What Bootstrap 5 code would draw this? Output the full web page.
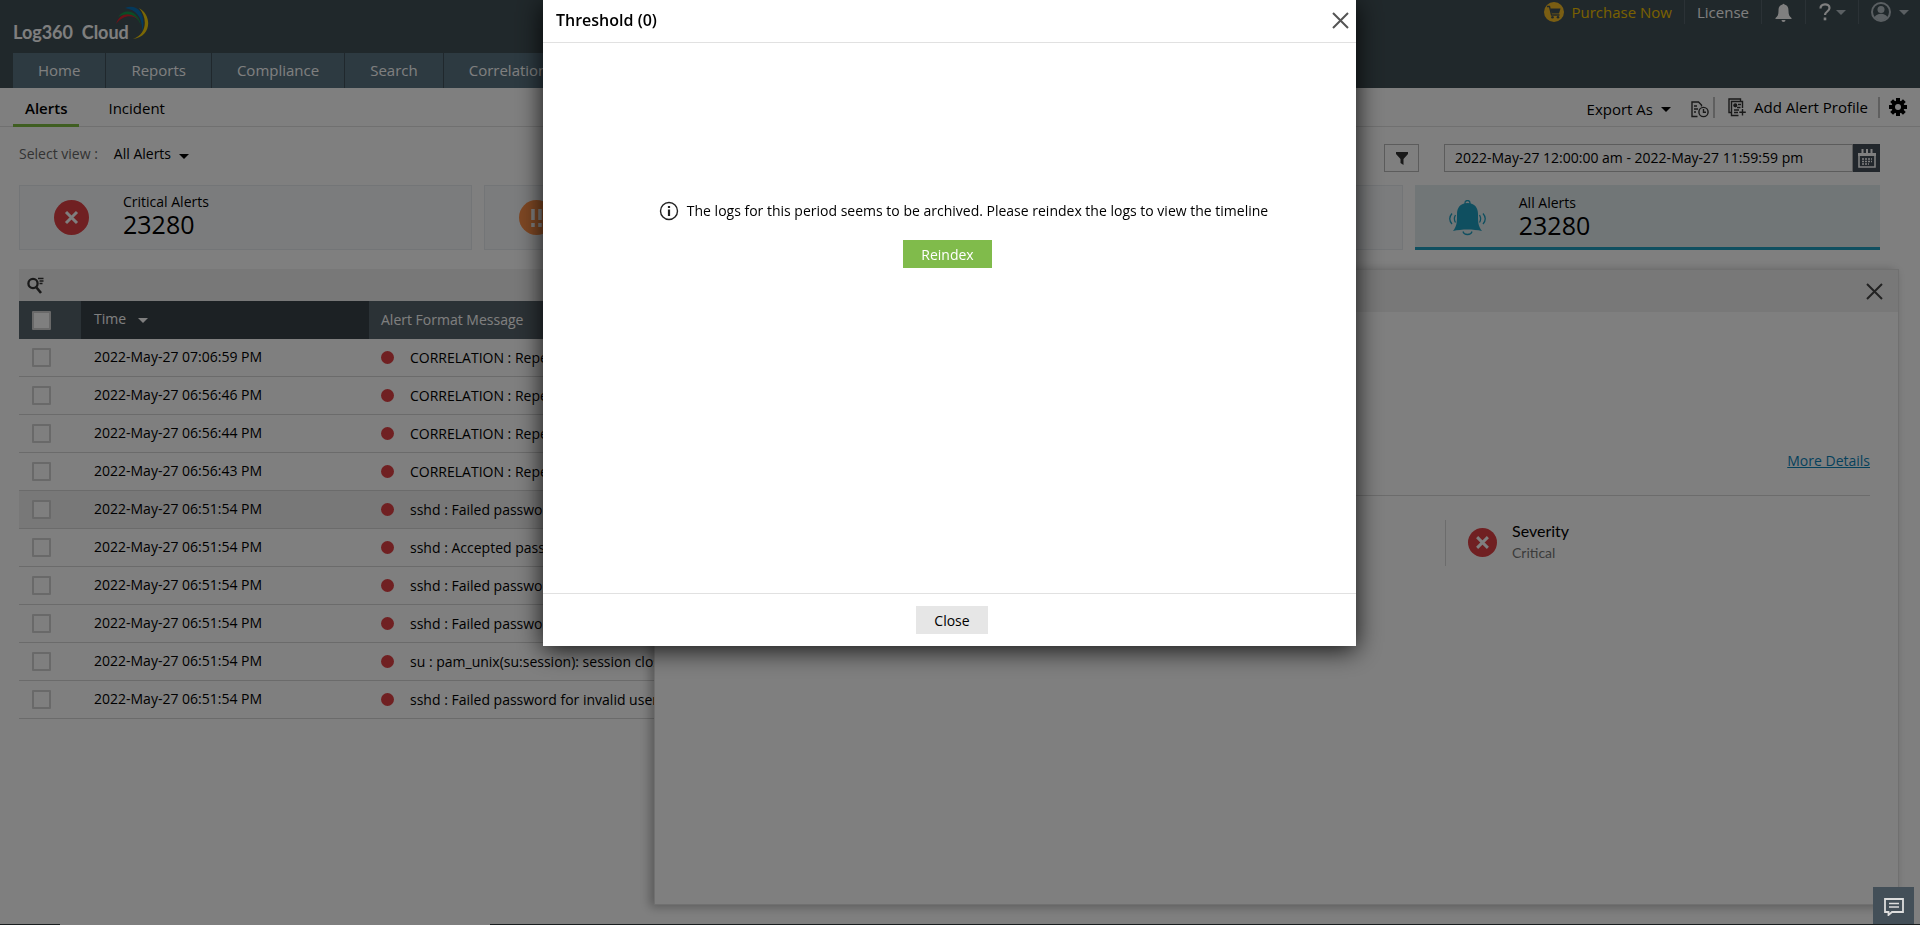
<!DOCTYPE html>
<html lang="en">
<head>
<meta charset="utf-8">
<meta name="viewport" content="width=device-width, initial-scale=1">
<title>Log360 Cloud</title>
<link href="https://cdn.jsdelivr.net/npm/bootstrap@5.3.0/dist/css/bootstrap.min.css" rel="stylesheet">
<style>
body{font-family:"Open Sans",sans-serif;font-size:14px;line-height:20px;color:#000;background:#fff;overflow:hidden}
a{text-decoration:none;color:inherit}
button{color:inherit}
svg{display:block;flex:none}
.bare{background:none;border:0;padding:0}
.topbar{background:#415056;height:88px;color:#fff}
.brand{font-family:Lato,"Open Sans",sans-serif;font-weight:700;font-size:18px;line-height:24px;padding:5px 0 0 13px;height:45px}
.brand-name{margin-top:15px}
.brand svg{margin-left:-14px}
.tools{font-size:15px;padding-right:11px;height:24px}
.tools .cell{height:24px;display:flex;align-items:center;border-left:1px solid #56656c;padding:0 12px}
.tools .cell:first-child{border:0}
.tools .cell:last-child{padding-right:0}
.buy{color:#f2c200}
.tools .caret,.account{color:#b5bfc5}
.caret{display:inline-block;border:5px solid transparent;border-top-color:currentColor;border-bottom:0}
.mainnav{padding-left:13px;font-size:15px}
.mainnav .nav-link{background:#5a7483;color:#fff;padding:0 25px;height:35px;line-height:34px;border-right:1px solid #40505a}
.subbar{height:39px;border-bottom:1px solid #e1e1e1;font-size:15px}
.subtabs{padding-left:13px}
.subtabs .nav-link{color:#000;height:39px;padding:0 12px;line-height:40px;margin-right:17px;border-bottom:3px solid transparent}
.subtabs .active{font-weight:600;border-color:#7fbc42}
.rule{width:2px;height:21px;background:#bfbfbf}
.filters{padding:17px 40px 0 19px;height:58px}
.filters label{color:#666}
.iconbtn{width:35px;height:28px;border:1px solid #b9b9b9;background:#fff;display:flex;align-items:center;justify-content:center;padding:0}
.daterange{width:436px;margin-left:25px}
.daterange input{border:1px solid #b9b9b9;border-radius:0;height:28px;padding:0 10px 2px;flex:1;min-width:0;font:inherit;color:#000}
.daterange button{width:27px;height:28px;background:#444f59;border:0;padding:0;display:flex;align-items:center;justify-content:center}
.tiles{padding:0 40px 0 19px}
.tile-col{width:25%;padding-right:12px}
.tile-col:last-child{padding-right:0}
.tile{height:65px;border:1px solid #e6eaee;background:#f7f9fb;padding-left:34px;display:flex;align-items:center}
.tile .words{margin-left:34px;line-height:20px;padding-bottom:6px}
.tile .total{font-size:25px;line-height:25px}
.tile.on{background:#e2edef;border:0;border-bottom:3px solid #1f9fc1;padding-left:34px}
.tile.on svg{margin-top:3px}
.tile.on .words{padding-bottom:2px;margin-left:33px}
.stage{margin:19px 21px 19px 19px;flex:1;position:relative}
.searchbar{height:32px;background:#f1f1f1;padding:8px 8px}
.alerts{width:100%;table-layout:fixed;border-collapse:separate;border-spacing:0}
.alerts th{height:38px;background:#57646c;color:#fff;font-weight:400;padding:0 13px}
.alerts th.sorted{background:#384249;padding-bottom:2px}
.alerts td{height:38px;border-bottom:1px solid #d6d6d6;padding:0 13px;white-space:nowrap;overflow:hidden}
.alerts td:nth-child(2){padding-bottom:2px}
.alerts td:nth-child(3),.alerts th:nth-child(3){padding-left:12px}
.alerts .picked td{background:#f1f1f1}
.check{appearance:none;width:19px;height:19px;border:2px solid #d2d2d2;background:#fff;display:block;margin:0;border-radius:1px}
.dot{width:13px;height:13px;border-radius:50%;background:#e04144;margin-right:16px;flex:none}
.detail{position:absolute;top:0;right:0;bottom:0;width:66.2%;background:#fff;border:1px solid #e0e0e0;box-shadow:-4px 2px 10px rgba(0,0,0,.3)}
.detail-head{height:42px;background:#f1f1f1;padding:0 15px}
.detail-main{margin:0 28px 0 28px}
.more{padding-top:139px;height:184px;border-bottom:1px solid #d9d9d9}
.more a{color:#0a83b9;text-decoration:underline}
.severity{width:425px;height:46px;margin-top:24px;border-left:1px solid #d9d9d9;padding:0 0 2px 22px;font-family:Lato,sans-serif}
.severity .name{font-size:16px;line-height:22px}
.severity .level{color:#777;line-height:22px}
.edge{height:1px;background:#323a3d}
.edge i{height:1px;background:#fff;width:430px;margin-left:60px}
.modal{padding-right:21px}
.modal-backdrop{--bs-backdrop-opacity:.5}
.modal-dialog{max-width:813px;margin:0 auto}
.modal-content{border:0;border-radius:0;box-shadow:0 4px 24px rgba(0,0,0,.85);color:#000}
.modal-header{height:43px;padding:0 7px 2px 13px;border-color:#e1e1e1;border-radius:0}
.modal-title{font-size:16px;line-height:22px;font-weight:600}
.modal-body{height:550px;padding:147px 0 0}
.modal-footer{height:53px;padding:0;border-color:#e1e1e1}
.notice{padding-left:28px;height:42px}
.modal .btn{border:0;border-radius:0;font-size:14px;height:28px;padding:0 18px;line-height:27px}
.btn-go{background:#80bb4b;color:#fff;margin-right:4px}
.modal .btn-shut{background:#e6e6e6;color:#000;margin-left:9px}
.chat{position:fixed;right:6px;bottom:1px;width:41px;height:37px;background:#434f58;z-index:1060;border:0;padding:2px 0 0;display:flex;align-items:center;justify-content:center}
</style>
</head>
<body>
<div class="vh-100 d-flex flex-column">
  <header class="topbar d-flex flex-column justify-content-between">
    <div class="d-flex justify-content-between">
      <a href="#" class="brand d-flex"><span class="brand-name">Log360 &nbsp;Cloud</span>
        <svg width="35" height="35" viewBox="0 0 35 35" fill="none"><path d="M1 19C5 7 17 6 24 15C17 9 8 10 1 19Z" fill="#d9232e"/><path d="M3 12C10 3 22 5 26 20C22 10 13 6 3 12Z" fill="#159a4c"/><path d="M10 3C23-2 32 10 27 27C28 13 22 5 10 3Z" fill="#0872b9"/><path d="M24 3C38 11 36 32 18 34C32 29 33 13 24 3Z" fill="#f5cf0a"/></svg></a>
      <div class="tools d-flex">
        <a href="#" class="cell buy"><svg class="me-2" width="20" height="20" viewBox="0 0 20 20"><circle cx="10" cy="10" r="10" fill="#f4bd27"/><path d="M3 4.500h2.500l2 8.500h8" fill="none" stroke="#415056" stroke-width="1.300"/><path d="M6.500 6.500h10l-1.500 5h-7.500Z" fill="#415056"/><circle cx="8.500" cy="15.200" r="1.300" fill="#415056"/><circle cx="14" cy="15.200" r="1.300" fill="#415056"/></svg>Purchase Now</a>
        <a href="#" class="cell">License</a>
        <a href="#" class="cell" aria-label="Notifications"><svg width="19" height="19" viewBox="0 0 17 19" fill="#fff"><path d="M7.500 1.500a1.200 1.200 0 0 1 2 0C13 2.500 13.500 5 13.500 8c0 4 1 5.500 3 7v1H.5v-1c2-1.500 3-3 3-7 0-3 .5-5.500 4-6.500ZM6.500 17h4a2 2 0 0 1-4 0Z"/></svg></a>
        <a href="#" class="cell" aria-label="Help"><svg width="14" height="18" viewBox="0 0 14 18" fill="none" stroke="#fff" stroke-width="2.200"><path d="M2.500 5.500C2.500 0 11.500 0 11.500 5c0 3.500-4.500 3.500-4.500 7"/><path d="M7 14.500v2.800" stroke-width="2.600"/></svg><span class="caret ms-1"></span></a>
        <a href="#" class="cell account" aria-label="Account"><svg width="20" height="20" viewBox="0 0 20 20"><circle cx="10" cy="10" r="9" fill="none" stroke="#b5bfc5" stroke-width="2"/><circle cx="10" cy="7.500" r="3.500" fill="#b5bfc5"/><path d="M3.500 15.500c2-5 11-5 13 0a9 9 0 0 1-13 0Z" fill="#b5bfc5"/></svg><span class="caret ms-2"></span></a>
      </div>
    </div>
    <nav class="nav mainnav">
      <a class="nav-link" href="#">Home</a><a class="nav-link" href="#">Reports</a><a class="nav-link" href="#">Compliance</a><a class="nav-link" href="#">Search</a><a class="nav-link" href="#">Correlation</a>
    </nav>
  </header>
  <div class="subbar d-flex justify-content-between">
    <nav class="nav subtabs"><a class="nav-link active" href="#">Alerts</a><a class="nav-link" href="#">Incident</a></nav>
    <div class="d-flex align-items-center" style="padding-right:13px">
      <button class="bare d-flex align-items-center pt-1">Export As <span class="caret ms-2"></span></button>
      <button class="bare pt-1 ms-3 me-1" aria-label="Schedule export"><svg class="ms-1" width="18" height="17" viewBox="0 0 18 17" fill="none" stroke="#333" stroke-width="1.400"><path d="M6.500 15.500H1V1h6.500l3 3v1.500M3 5h3M3 8h4M3 11h2"/><circle cx="12.500" cy="11" r="4.600" fill="#fff"/><path d="M12.500 8v3.200h2.500"/></svg></button>
      <span class="rule"></span>
      <a href="#" class="d-flex align-items-center"><svg class="me-2" style="margin-left:13px" width="18" height="19" viewBox="0 0 18 19" fill="none" stroke="#333" stroke-width="1.400"><path d="M3 14.500H1V1h11.500v2M10.500 17.500H3.500V3.500h11V10M9 9.500h3.500M6 12h5M6 14.500h4M10 6.500h3"/><circle cx="7.300" cy="7.300" r="1.400" fill="#333"/><path d="M14.500 11v6.500M11.300 14.300h6.500"/></svg>Add Alert Profile</a>
      <span class="rule" style="margin:0 9px 0 10px"></span>
      <button class="bare" aria-label="Settings"><svg width="18" height="18" viewBox="-9 -9 18 18"><g fill="#000"><circle r="6.500"/><rect x="-2" y="-9" width="4" height="18"/><rect x="-2" y="-9" width="4" height="18" transform="rotate(45)"/><rect x="-2" y="-9" width="4" height="18" transform="rotate(90)"/><rect x="-2" y="-9" width="4" height="18" transform="rotate(135)"/></g><circle r="3" fill="#fff"/></svg></button>
    </div>
  </div>
  <div class="filters d-flex justify-content-between">
    <div class="d-flex align-items-start"><label for="view">Select view :</label><button id="view" class="bare d-flex align-items-center ms-3">All Alerts <span class="caret ms-2 mt-1"></span></button></div>
    <div class="d-flex align-items-start">
      <button class="iconbtn" aria-label="Filter"><svg width="12" height="13" viewBox="0 0 12 13"><path d="M0 0h12v2L7.500 7v6l-3-2V7L0 2Z" fill="#333"/></svg></button>
      <div class="daterange d-flex"><input type="text" aria-label="Date range" value="2022-May-27 12:00:00 am - 2022-May-27 11:59:59 pm"><button aria-label="Open calendar"><svg width="18" height="19" viewBox="0 0 18 19" fill="none" stroke="#fff"><path d="M1 4v14h16V4" stroke-width="1.600"/><path d="M0 5.500h18" stroke-width="3"/><path d="M4.500 0v5M9 0v5M13.500 0v5" stroke-width="2"/><path d="M4 10h10M4 12.500h10M4 15h7" stroke-width="1.600" stroke-dasharray="2 1"/></svg></button></div>
    </div>
  </div>
  <div class="tiles d-flex">
    <div class="tile-col"><div class="tile"><svg width="35" height="35" viewBox="0 0 35 35"><circle cx="17.500" cy="17.500" r="17.500" fill="#e04144"/><path d="M12 12l11 11M23 12L12 23" stroke="#fff" stroke-width="3"/></svg><div class="words">Critical Alerts<div class="total">23280</div></div></div></div>
    <div class="tile-col"><div class="tile"><svg width="35" height="35" viewBox="0 0 35 35"><circle cx="17.500" cy="17.500" r="17.500" fill="#fd8f47"/><path d="M14 9v11M21 9v11M14 23v4M21 23v4" stroke="#fff" stroke-width="3.500"/></svg></div></div>
    <div class="tile-col"><div class="tile"></div></div>
    <div class="tile-col"><div class="tile on"><svg width="37" height="36" viewBox="0 0 37 36" fill="none" stroke="#1f9fc1" stroke-width="1.300"><circle cx="18.500" cy="3" r="2.500"/><path d="M14 31.500c1 4 8 4 9 0"/><path d="M6.500 15c-1.500 2.500-1.500 5 0 7.500M3 13.500c-3 3.500-3 7 0 10.500M30.500 15c1.500 2.500 1.500 5 0 7.500M34 13.500c3 3.500 3 7 0 10.500"/><path d="M18.500 3C11 3 8 8 8 14c0 8 0 12-4 17 9-2 20-2 29 0-4-5-4-9-4-17 0-6-3-11-10.500-11Z" fill="#1f9fc1" stroke="none"/></svg><div class="words">All Alerts<div class="total">23280</div></div></div></div>
  </div>
  <main class="stage">
    <div class="searchbar"><button class="bare" aria-label="Search"><svg width="17" height="17" viewBox="0 0 17 17" fill="none" stroke="#333"><circle cx="6" cy="6.500" r="4.600" stroke-width="2.300"/><path d="M9.500 10.500l4.500 5.500" stroke-width="2.600"/><path d="M11 1.500h5.500M12.500 4h4M12.500 6.500h3" stroke-width="1.300"/></svg></button></div>
    <table class="alerts">
      <colgroup><col style="width:62px"><col style="width:288px"><col></colgroup>
      <thead><tr><th><input type="checkbox" class="check" aria-label="Select all"></th><th class="sorted">Time <span class="caret ms-2 align-middle"></span></th><th>Alert Format Message</th></tr></thead>
      <tbody id="rows"></tbody>
    </table>
    <section class="detail">
      <div class="detail-head d-flex align-items-center justify-content-end"><button class="bare" aria-label="Close details"><svg width="17" height="17" viewBox="0 0 17 17" stroke="#444" stroke-width="2"><path d="M1 1l15 15M16 1L1 16"/></svg></button></div>
      <div class="detail-main">
        <div class="more text-end"><a href="#">More Details</a></div>
        <div class="severity ms-auto d-flex align-items-center"><svg width="29" height="29" viewBox="0 0 35 35"><circle cx="17.500" cy="17.500" r="17.500" fill="#e04144"/><path d="M11 11l13 13M24 11L11 24" stroke="#fff" stroke-width="3.500"/></svg><div style="margin-left:15px"><div class="name">Severity</div><div class="level">Critical</div></div></div>
      </div>
    </section>
  </main>
  <div class="edge d-flex"><i></i></div>
</div>
<div class="modal-backdrop show"></div>
<div class="modal d-block" role="dialog" aria-labelledby="dlg">
  <div class="modal-dialog"><div class="modal-content">
    <div class="modal-header d-flex justify-content-between align-items-center"><h1 class="modal-title" id="dlg">Threshold (0)</h1><button class="bare" aria-label="Close dialog"><svg width="17" height="17" viewBox="0 0 17 17" stroke="#555" stroke-width="2"><path d="M1 1l15 15M16 1L1 16"/></svg></button></div>
    <div class="modal-body text-center">
      <div class="notice d-flex align-items-center justify-content-center"><svg class="me-2" width="20" height="20" viewBox="0 0 20 20" fill="none" stroke="#222"><circle cx="10" cy="10" r="8.500" stroke-width="1.400"/><path d="M10 8.500V15M10 5v2" stroke-width="2.200"/></svg><span>The logs for this period seems to be archived. Please reindex the logs to view the timeline</span></div>
      <button class="btn btn-go mt-2">Reindex</button>
    </div>
    <div class="modal-footer justify-content-center"><button class="btn btn-shut">Close</button></div>
  </div></div>
</div>
<button class="chat" aria-label="Chat"><svg width="20" height="18" viewBox="0 0 20 18" fill="none" stroke="#ddd"><path d="M1 1h18v13H8l-3.500 3v-3H1Z" stroke-width="1.800"/><path d="M5 5.500h10M5 9h10" stroke-width="1.500"/></svg></button>
<script>
const rows = [
  ['07:06:59','CORRELATION : Repeated failed logins'],
  ['06:56:46','CORRELATION : Repeated failed logins'],
  ['06:56:44','CORRELATION : Repeated failed logins'],
  ['06:56:43','CORRELATION : Repeated failed logins'],
  ['06:51:54','sshd : Failed password'],
  ['06:51:54','sshd : Accepted password'],
  ['06:51:54','sshd : Failed password'],
  ['06:51:54','sshd : Failed password'],
  ['06:51:54','su : pam_unix(su:session): session closed'],
  ['06:51:54','sshd : Failed password for invalid user']
];
document.getElementById('rows').innerHTML = rows.map((r, i) =>
  `<tr${i === 4 ? ' class="picked"' : ''}><td><input type="checkbox" class="check" aria-label="Select alert ${i + 1}"></td><td>2022-May-27 ${r[0]} PM</td><td><div class="d-flex align-items-center"><span class="dot"></span>${r[1]}</div></td></tr>`).join('');
</script>
<script src="https://cdn.jsdelivr.net/npm/bootstrap@5.3.0/dist/js/bootstrap.bundle.min.js"></script>
</body>
</html>
